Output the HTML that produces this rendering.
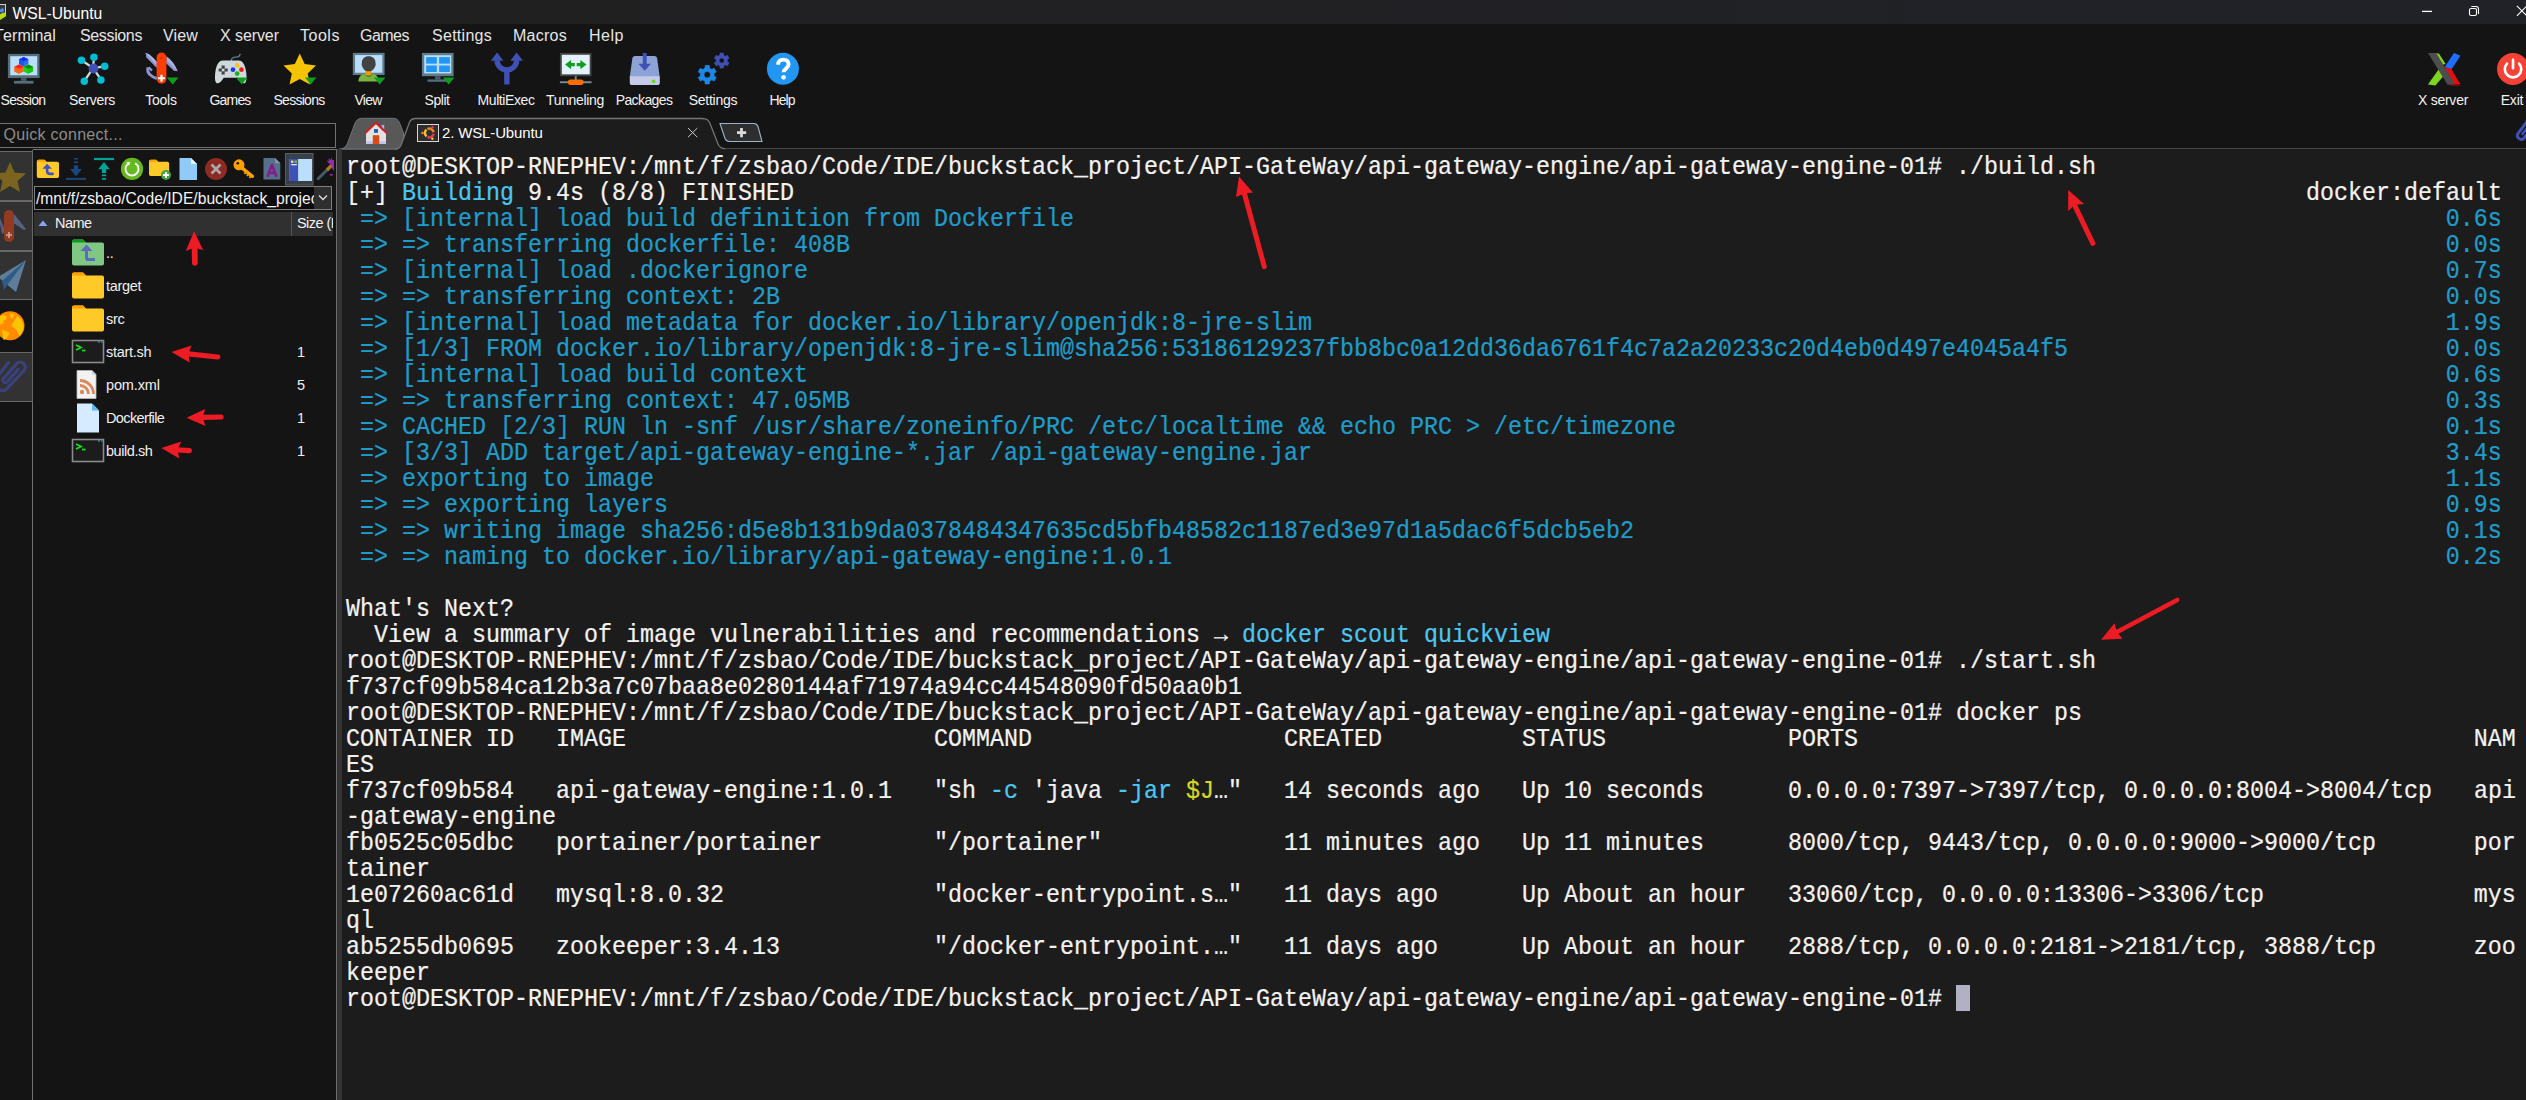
<!DOCTYPE html>
<html>
<head>
<meta charset="utf-8">
<title>WSL-Ubuntu</title>
<style>
*{box-sizing:border-box;margin:0;padding:0}
html,body{width:2526px;height:1100px;overflow:hidden;background:#141414}
body{position:relative;font-family:"Liberation Sans",sans-serif;color:#eee}
.abs{position:absolute}
#titlebar{left:0;top:0;width:2526px;height:23.8px;background:linear-gradient(90deg,#202020 0%,#212124 50%,#202228 100%)}
#title{left:12.5px;top:3.5px;font-size:15.7px;line-height:20px;color:#fff;white-space:nowrap}
.menu{top:26px;font-size:16px;line-height:20px;color:#e6e6e6;white-space:nowrap}
.tb{top:50px;width:68px;height:64px;text-align:center}
.tb svg{position:absolute;left:17.3px;top:2.4px;width:33.5px;height:33.5px;overflow:visible}
.tb span{position:absolute;left:-11px;right:-9px;top:41px;font-size:14px;line-height:18px;color:#f2f2f2;white-space:nowrap;letter-spacing:-0.45px}
#quick{left:-1px;top:123px;width:337px;height:25px;border:1px solid #727272;background:#121212}
#quick span{position:absolute;left:3.5px;top:1px;font-size:16px;line-height:20px;color:#8c8c8c;letter-spacing:0.28px}
#term{left:342px;top:150px;width:2184px;height:950px;background:#1c1c1c}
#split{left:337px;top:149px;width:5px;height:951px;background:#333}
pre{position:absolute;left:4px;top:5px;font-family:"Liberation Mono",monospace;font-size:23.33px;line-height:26px;color:#f2f2f2;white-space:pre;-webkit-text-stroke:0.22px currentColor}
.l{display:block;height:26px;transform-origin:0 19.2px;transform:scaleY(1.065)}
.c{color:#1f9ccc}.b{color:#4cc6f3}.y{color:#d6d629}
#cursor{left:1614px;top:835px;width:14px;height:26px;background:#b2b0c3}
#strip{left:0;top:150px;width:33px;height:950px;background:#141414;border-right:1px solid #707070}
.stab{left:0;width:33px;background:#323232;border:1px solid #686868;border-left:none}
#fpanel{left:33px;top:149px;width:304px;height:951px;border-top:1px solid #747474;border-right:1px solid #6c6c6c}
#path{left:34px;top:186px;width:298px;height:24px;border:1px solid #808080;background:#0c0c0c;overflow:hidden}
#path span{position:absolute;left:1px;top:2px;font-size:15.65px;line-height:20px;color:#f4f4f4;white-space:nowrap}
#pathdd{left:279px;top:0;width:17px;height:22px;background:#2e2e2e}
#fhead{left:34px;top:212px;width:299px;height:24px;background:#303030}
.frow{left:106px;font-size:14.5px;line-height:18px;color:#f0f0f0;white-space:nowrap;letter-spacing:-0.3px}
.fsz{left:296px;width:10px;font-size:14.5px;line-height:18px;color:#f0f0f0;text-align:center}
.fic{left:71px;width:34px;height:30px;overflow:visible}
</style>
</head>
<body>
<div id="titlebar" class="abs"></div>
<div id="title" class="abs">WSL-Ubuntu</div>
<!--WINCTL-->
<svg class="abs" style="left:2400px;top:0;width:126px;height:24px" viewBox="0 0 126 24">
<path d="M22 11.400H32" stroke="#fff" stroke-width="1.300" fill="none"/>
<rect x="69.500" y="8.500" width="7" height="7" rx="1.600" stroke="#fff" stroke-width="1.100" fill="none"/>
<path d="M71.700 6.500H76Q78.500 6.500 78.500 9V13.400" stroke="#fff" stroke-width="1.100" fill="none" stroke-linecap="round"/>
<path d="M116.900 5.900L127.500 16.500M127.500 5.300L116.900 15.900" stroke="#fff" stroke-width="1.100" fill="none"/>
</svg>
<svg class="abs" style="left:0;top:0;width:10px;height:24px" viewBox="0 0 10 24">
<rect x="-6" y="4.500" width="11.500" height="11" fill="#3a3a3a" stroke="#cfcfcf" stroke-width="1"/>
<path d="M0 9.500L2.500 8L4.200 9.500L3.500 11.500L1.500 12.500L0 12Z" fill="#4a8df0"/>
<path d="M0 14.500L2 13L4.500 12.500L5.700 14V16.500L0 20Z" fill="#a8e400"/><path d="M0 15L2.500 13.500L3.500 15.500L0 18Z" fill="#c8d820"/>
</svg>
<!--/WINCTL-->
<!--MENU-->
<div class="abs menu" id="m0" style="left:-4px;letter-spacing:0.06px"><span style="margin-left:-2px;margin-right:-0.8px">T</span>erminal</div>
<div class="abs menu" id="m1" style="left:80px;letter-spacing:-0.36px">Sessions</div>
<div class="abs menu" id="m2" style="left:163px;letter-spacing:0.15px">View</div>
<div class="abs menu" id="m3" style="left:220px;letter-spacing:-0.08px">X server</div>
<div class="abs menu" id="m4" style="left:300px;letter-spacing:0.52px">Tools</div>
<div class="abs menu" id="m5" style="left:360px;letter-spacing:-0.52px">Games</div>
<div class="abs menu" id="m6" style="left:432px;letter-spacing:0.28px">Settings</div>
<div class="abs menu" id="m7" style="left:513px;letter-spacing:0.25px">Macros</div>
<div class="abs menu" id="m8" style="left:589px;letter-spacing:0.53px">Help</div>
<!--/MENU-->
<!--TOOLBAR-->
<div class="abs tb" style="left:-10px"><svg viewBox="0 0 36 36"><rect x="1" y="2" width="34" height="26" fill="#546e7a"/><rect x="3.500" y="4.500" width="29" height="20.500" fill="#bbdefb"/><rect x="15" y="28" width="6" height="3" fill="#455a64"/><rect x="7.500" y="31" width="21" height="3" fill="#546e7a"/>
<path d="M18 5.500l5 2.300v5.200L18 15.500l-5-2.500v-5.200Z" fill="#2a6cf0"/><path d="M18 5.500l5 2.300-5 2.500-5-2.500Z" fill="#1428ff"/><path d="M18 10.300v5.200l-5-2.500v-5.200Z" fill="#1e58e0"/>
<path d="M13 13.500l5 2.300v5.200L13 23.500l-5-2.500v-5.200Z" fill="#f4681e"/><path d="M13 13.500l5 2.300-5 2.500-5-2.500Z" fill="#ff2020"/><path d="M13 18.300v5.200l-5-2.500v-5.200Z" fill="#f06a10"/>
<path d="M23 13.500l5 2.300v5.200L23 23.500l-5-2.500v-5.200Z" fill="#14c414"/><path d="M23 13.500l5 2.300-5 2.500-5-2.500Z" fill="#0c8c0c"/><path d="M23 18.300v5.200l-5-2.500v-5.200Z" fill="#20d020"/></svg><span style="letter-spacing:-0.70px">Session</span></div>
<div class="abs tb" style="left:59px"><svg viewBox="0 0 36 36"><g transform="translate(18.300 18.500) scale(0.940) translate(-18 -18.300)"><g stroke="#cfd8dc" stroke-width="2.600"><path d="M18 17L19 5M18 17L5 8M18 17L31 15M18 17L8 32M18 17L27 30"/></g>
<circle cx="18.500" cy="17.500" r="5.600" fill="#3f51b5"/><circle cx="19" cy="4.500" r="4.300" fill="#00bcd4"/><circle cx="4.700" cy="8" r="4.300" fill="#00bcd4"/><circle cx="31.300" cy="15" r="4.300" fill="#00bcd4"/><circle cx="8" cy="32" r="4.300" fill="#00bcd4"/><circle cx="27" cy="30.500" r="4.300" fill="#00bcd4"/></g></svg><span style="letter-spacing:-0.32px">Servers</span></div>
<div class="abs tb" style="left:128px"><svg viewBox="0 0 36 36"><path d="M0.600 0.900L4.500 2.500Q10 7 12.700 10.400V17L1.800 5.800Z" fill="#b0b6e4"/><path d="M0.600 0.900L12.700 14.500V17L1.800 5.800Z" fill="#8c94d0"/>
<path d="M23 4.600Q31 10 35.100 20.700L31 19.800L23 12Z" fill="#aab0e0"/><path d="M23 9L35.100 20.700L31 19.800L23 12Z" fill="#8c94d0"/>
<path d="M3.200 16.500q-1.200 4.500 2 7.700q3 3 7.500 4.300" stroke="#8c94d0" stroke-width="3.200" fill="none"/><path d="M4 16.500l3.500 3.500" stroke="#8c94d0" stroke-width="2.400"/>
<rect x="12.500" y="0.600" width="10.500" height="33.400" rx="5.200" fill="#ff3d00"/><circle cx="17.700" cy="6.500" r="1.500" fill="#d83000"/><path d="M17.700 24.500v7.500M14 28.200h7.500" stroke="#fff" stroke-width="2.300"/><path d="M23.5 27.5H36L29.8 35Z" fill="#0f9d1f"/></svg><span style="letter-spacing:-0.24px">Tools</span></div>
<div class="abs tb" style="left:197px"><svg viewBox="0 0 36 36"><path d="M18.500 10c0-3.500 2-4.500 5-4.500s4.500-1 4.500-3.500" stroke="#607d8b" stroke-width="1.500" fill="none"/>
<path d="M9.500 9.200h17c4.500 0 7 5 8 12c1 7 0.500 12.500-2.500 12.500c-2.500 0-4.500-3-6.500-6H10.500c-2 3-4 6-6.500 6c-3 0-3.500-5.500-2.500-12.500C2.500 14.200 5 9.200 9.500 9.200Z" fill="#cfd8dc"/>
<path d="M8.200 14.500h3.300v3.200h3.200v3.300h-3.200v3.200h-3.300v-3.200h-3.200v-3.300h3.200Z" fill="#424242"/><rect x="8.400" y="17.900" width="2.900" height="2.900" fill="#cfd8dc"/>
<circle cx="24.900" cy="14.400" r="2.500" fill="#f5c518"/><circle cx="20.400" cy="19" r="2.500" fill="#1a34f0"/><circle cx="29.500" cy="19" r="2.500" fill="#ff1414"/><circle cx="24.900" cy="23.200" r="2.500" fill="#14b414"/><path d="M23.5 27.5H36L29.8 35Z" fill="#0f9d1f"/></svg><span style="letter-spacing:-0.80px">Games</span></div>
<div class="abs tb" style="left:266px"><svg viewBox="0 0 36 36"><path d="M18 1.500L23.300 13L35.500 14.500L26.500 23L29 35L18 29L7 35L9.500 23L0.500 14.500L12.700 13Z" fill="#f5c400"/><path d="M23.5 27.5H36L29.8 35Z" fill="#0f9d1f"/></svg><span style="letter-spacing:-0.71px">Sessions</span></div>
<div class="abs tb" style="left:335px"><svg viewBox="0 0 36 36"><rect x="0.900" y="0.900" width="34.100" height="23.800" fill="#607d8b"/><rect x="3.300" y="3.300" width="29.300" height="19" fill="#bbdefb"/>
<path d="M6.900 31.600c0-6 4-8.400 11-8.400s10.800 2.400 10.800 8.400Z" fill="#7cb342"/><path d="M13.500 22.500h9l-1.500 3a3.500 3.500 0 0 1-6 0Z" fill="#558b2f"/><path d="M14.300 20h6.800v2.800a3.400 2.200 0 0 1-6.800 0Z" fill="#ff9800"/>
<ellipse cx="10.900" cy="14" rx="1" ry="1.600" fill="#ff9800"/><ellipse cx="24.900" cy="14" rx="1" ry="1.600" fill="#ff9800"/>
<path d="M10.600 12c0-5 3-7.400 7.300-7.400s7.400 2.400 7.400 7.400c0 4.500-2.500 8.700-7.400 8.700s-7.300-4.200-7.300-8.700Z" fill="#424242"/><path d="M23.5 27.5H36L29.8 35Z" fill="#0f9d1f"/></svg><span style="letter-spacing:-0.80px">View</span></div>
<div class="abs tb" style="left:404px"><svg viewBox="0 0 36 36"><rect x="1" y="1" width="34" height="25" fill="#607d8b"/><rect x="3.500" y="3.500" width="29" height="19.500" fill="#bbdefb"/>
<rect x="5.500" y="5.500" width="11.500" height="7" fill="#2196f3"/><rect x="19.500" y="5.500" width="11.500" height="7" fill="#2196f3"/><rect x="5.500" y="14.500" width="11.500" height="7" fill="#2196f3"/><rect x="19.500" y="14.500" width="11.500" height="7" fill="#2196f3"/>
<rect x="15" y="26" width="6" height="3.500" fill="#455a64"/><rect x="7" y="29.500" width="22" height="2.500" fill="#546e7a"/><path d="M23.5 27.5H36L29.8 35Z" fill="#0f9d1f"/></svg><span style="letter-spacing:-0.45px">Split</span></div>
<div class="abs tb" style="left:473px"><svg viewBox="0 0 36 36"><path d="M7.600 8.800a10.500 10.500 0 0 0 21 0M18.100 19V35" stroke="#3f51b5" stroke-width="5.800" fill="none"/><path d="M7.600 0.500L14.400 9.300H0.800Z" fill="#3f51b5"/><path d="M28.600 0.500L35.400 9.300H21.800Z" fill="#3f51b5"/></svg><span style="letter-spacing:-0.41px">MultiExec</span></div>
<div class="abs tb" style="left:542px"><svg viewBox="0 0 36 36"><rect x="1" y="1" width="34" height="25" fill="#424242"/><rect x="3" y="3" width="30" height="21" fill="#e3f2fd"/>
<path d="M6.500 13.500L13 8.500v3.300h4v3.400h-4v3.300Z" fill="#0f9d1f"/><path d="M29.500 13.500L23 8.500v3.300h-4v3.400h4v3.300Z" fill="#0f9d1f"/>
<rect x="17" y="26" width="2" height="4" fill="#78909c"/><rect x="1" y="31.500" width="34" height="2" fill="#78909c"/><rect x="9.500" y="29.500" width="17" height="6" rx="3" fill="#ff6d00"/></svg><span style="letter-spacing:-0.34px">Tunneling</span></div>
<div class="abs tb" style="left:611px"><svg viewBox="0 0 36 36"><path d="M7.500 4.200h21c1.500 0 2.500 1 2.800 2.500L34 26v7c0 1.500-1 2.500-2.500 2.500H4.500c-1.500 0-2.500-1-2.500-2.500v-7L4.700 6.700C5 5.200 6 4.200 7.500 4.200Z" fill="#8ca3d6"/>
<path d="M2 26h32v7c0 1.500-1 2.500-2.500 2.500H4.500c-1.500 0-2.500-1-2.500-2.500Z" fill="#c5cae9"/><circle cx="27.500" cy="31.500" r="2" fill="#64dd17"/>
<path d="M15.900 1h4.200v11.500h4.600L18 20.200L11.300 12.500h4.600Z" fill="#3f51b5"/></svg><span style="letter-spacing:-0.60px">Packages</span></div>
<div class="abs tb" style="left:680px"><svg viewBox="0 0 36 36"><path d="M13.36 31.41L13.20 34.26L8.80 34.26L8.64 31.41L6.11 29.95L3.57 31.24L1.36 27.42L3.75 25.86L3.75 22.94L1.36 21.38L3.57 17.56L6.11 18.85L8.64 17.39L8.80 14.54L13.20 14.54L13.36 17.39L15.89 18.85L18.43 17.56L20.64 21.38L18.25 22.94L18.25 25.86L20.64 27.42L18.43 31.24L15.89 29.95ZM7.45 24.40a3.55 3.55 0 1 0 7.10 0a3.55 3.55 0 1 0 -7.10 0Z" fill="#1e88e5" fill-rule="evenodd" stroke="#1e88e5" stroke-width="0.8" stroke-linejoin="round"/><path d="M28.46 14.89L28.34 17.20L24.76 17.20L24.64 14.89L22.58 13.70L20.51 14.75L18.73 11.65L20.67 10.39L20.67 8.01L18.73 6.75L20.51 3.65L22.58 4.70L24.64 3.51L24.76 1.20L28.34 1.20L28.46 3.51L30.52 4.70L32.59 3.65L34.37 6.75L32.43 8.01L32.43 10.39L34.37 11.65L32.59 14.75L30.52 13.70ZM23.75 9.20a2.80 2.80 0 1 0 5.60 0a2.80 2.80 0 1 0 -5.60 0Z" fill="#3f51b5" fill-rule="evenodd" stroke="#3f51b5" stroke-width="0.8" stroke-linejoin="round"/></svg><span style="letter-spacing:-0.26px">Settings</span></div>
<div class="abs tb" style="left:749px"><svg viewBox="0 0 36 36"><circle cx="18.200" cy="18" r="17.200" fill="#2196f3"/><path d="M13 13.800c0-3.800 2.300-5.600 5.600-5.600s5.700 1.800 5.700 4.900c0 4.500-5.300 4.500-5.300 8.600" stroke="#fff" stroke-width="4.200" fill="none"/><circle cx="18.900" cy="27.200" r="2.500" fill="#fff"/></svg><span style="letter-spacing:-0.95px">Help</span></div>
<div class="abs tb" style="left:2410px"><svg viewBox="0 0 36 36"><path d="M1 35L13 18L21 22L9 36Z" fill="#7ed321"/><path d="M9 1L13 2L20 13L16 14Z" fill="#7ed321"/><path d="M29 1L36 4L26 19L19 16Z" fill="#1e6fff"/><path d="M19 16L26 18L36 35L28 34Z" fill="#e01010"/><path d="M23 34L36 35L35 36.500L24 36Z" fill="#a00000"/>
<path d="M1 1H10L30 35H22Z" fill="#4d4d4d"/></svg><span style="letter-spacing:-0.24px">X server</span></div>
<div class="abs tb" style="left:2479px"><svg viewBox="0 0 36 36"><circle cx="18.300" cy="18.300" r="17.200" fill="#f44336"/><path d="M11.800 12.500a8.800 8.800 0 1 0 13 0" stroke="#fff" stroke-width="2.800" fill="none" stroke-linecap="round"/><path d="M18.300 8.500v9" stroke="#fff" stroke-width="2.800" stroke-linecap="round"/></svg><span style="letter-spacing:-0.16px">Exit</span></div>
<!--/TOOLBAR-->
<div id="quick" class="abs"><span>Quick connect...</span></div>
<!--TABS-->
<svg class="abs" style="left:336px;top:110px;width:2190px;height:42px" viewBox="336 110 2190 42">
<path d="M342 148.700H2526" stroke="#747474" stroke-width="1.400" fill="none"/>
<path d="M339.500 149C344.500 149 346.500 146 348 142L354.700 124C356.300 120 358 118.300 362.500 118.300H392C397 118.300 398.500 120 400 124L403.500 133L404 149Z" fill="#585858" stroke="#6a737d" stroke-width="1"/>
<path d="M395 149.500C399 149.500 400.300 147.500 401.300 144.400L409.400 122.500C410.500 119.700 412 118.500 415.500 118.500H702C707 118.500 709 120 711 126L718 144C719.500 147.500 721 148.500 725 148.500H2526V152H395Z" fill="#1c1c1c"/>
<path d="M395 149.300C399 149.300 400.300 147.500 401.300 144.400L409.400 122.500C410.500 119.700 412 118.500 415.500 118.500H702C707 118.500 709 120 711 126L718 144C719.500 147.500 721 148.700 725 148.700" stroke="#747474" stroke-width="1.300" fill="none"/>
<path d="M720 123.500H754C756 123.500 757 124.500 758 126.500L762 141.500H729C727 141.500 726 140.500 725 138.500Z" fill="#2e2e2e" stroke="#9fb4c8" stroke-width="1.100"/>
<path d="M741.500 128v9.200M737 132.600h9.200" stroke="#dcdcdc" stroke-width="2.700"/>
<path d="M688 128L697.300 137.200M697.300 128L688 137.200" stroke="#c8c8c8" stroke-width="1"/>
<!-- home icon -->
<path d="M366 132.500L376 123.500L386 132.500V144H366Z" fill="#e2e2e2"/><rect x="366" y="141.200" width="20" height="2.800" fill="#c0c4f0"/>
<rect x="381.600" y="124.900" width="2.600" height="6" fill="#aab0ea"/>
<path d="M365 133.200L375.900 122.800L386.900 133.200" stroke="#cc2020" stroke-width="2.100" fill="none"/>
<rect x="372.800" y="135.200" width="6.400" height="8.800" fill="#dc4a14"/><rect x="374" y="129.100" width="4" height="3.700" fill="#1a5fb4"/>
<!-- ubuntu tab icon -->
<rect x="417.500" y="124.500" width="21" height="17" fill="#2e2e2e" stroke="#d8d8d8" stroke-width="1"/>
<path d="M426.470 129.630A4.400 4.400 0 0 0 426.470 136.370" stroke="#f5c030" stroke-width="2.500" fill="none"/>
<path d="M427.440 129.010A4.400 4.400 0 0 1 433.630 132.240" stroke="#f08020" stroke-width="2.500" fill="none"/>
<path d="M433.630 133.760A4.400 4.400 0 0 1 427.440 136.990" stroke="#e8385a" stroke-width="2.500" fill="none"/>
<circle cx="422.500" cy="133" r="1.250" fill="#f08a30"/><circle cx="432.400" cy="127.200" r="1.250" fill="#e8385a"/><circle cx="432.400" cy="138.700" r="1.250" fill="#f5c030"/>
<!-- right clip -->
<path d="M2528.500 119.500L2518 133.500a3.800 3.800 0 0 0 5.800 4.800L2531 129.500" stroke="#3f51b5" stroke-width="3" fill="none" stroke-linecap="round"/><path d="M2529.500 125L2522.500 134" stroke="#3f51b5" stroke-width="2.600" fill="none" stroke-linecap="round"/>
</svg>
<div class="abs" id="tabtxt" style="left:442px;top:123px;font-size:15px;line-height:20px;color:#fff;white-space:nowrap;letter-spacing:-0.15px">2. WSL-Ubuntu</div>
<!--/TABS-->
<div id="strip" class="abs"></div>
<!--STRIP-->
<div class="abs stab" style="top:151px;height:50px"></div>
<div class="abs stab" style="top:201px;height:50px"></div>
<div class="abs stab" style="top:251px;height:49px"></div>
<div class="abs stab" style="top:352px;height:50px"></div>
<svg class="abs" style="left:0;top:150px;width:33px;height:260px" viewBox="0 150 33 260">
<path d="M10 162L14.500 172.500L26 173.500L17.500 181L20 192L10 186L0 192L2.500 181L-6 173.500L5.500 172.500Z" fill="#7a6420"/>
<path d="M-2 214L6 232L2 234Z" fill="#565e80"/><path d="M14 214L26 229L24 230L12 222Z" fill="#5a6080"/>
<rect x="4" y="210" width="10" height="32" rx="5" fill="#923a22"/><path d="M9 232v6M6 235h6" stroke="#c9a79d" stroke-width="1.600"/>
<path d="M26 260L-2 277L16 292Z" fill="#5d7d99"/><path d="M26 260L2 281L4 290L8 284Z" fill="#2e5a85"/>
<circle cx="10" cy="325.800" r="14.500" fill="#ff8c00"/>
<path d="M-4 317.500q2-2 5-1.500l2.500-1 3 1.500-0.500 3-3 1 1 2.500-3.500 1.500-2 3-3-1Z" fill="#ffc400"/><path d="M10 313.500l4 0.500-1 4.500-2.500-1Z" fill="#ffc400"/>
<path d="M17 316q5 3 6.500 9.500q0 6-4 10.500l-3-6-5-4.500 3-5Z" fill="#ffc400"/><path d="M2 329.500l7.500 3.500-3 5.500-3 1.500Z" fill="#ffc400"/>
<path d="M8.500 362.500L-3 377" stroke="#3a4078" stroke-width="3.400" fill="none" stroke-linecap="round"/>
<path d="M-2 388.500Q3 393 7.500 388L24 370.500A5 5 0 0 0 16.500 363.800L3.500 378.500A2.300 2.300 0 0 0 7 381.800L18 369.500" stroke="#3a4078" stroke-width="3.400" fill="none" stroke-linecap="round"/>
</svg>
<!--/STRIP-->
<div id="fpanel" class="abs"></div>
<!--FTOOLS-->
<svg class="abs" style="left:33px;top:152px;width:304px;height:34px" viewBox="33 152 304 34">
<rect x="285.500" y="153.500" width="27.500" height="31.500" fill="#37404d" stroke="#5c5c5c" stroke-width="1"/>
<!-- folder up -->
<path d="M36.800 161.500q0-1.700 1.700-1.700h6l2 2h10.800q1.700 0 1.700 1.700v12.700q0 1.700-1.700 1.700h-18.800q-1.700 0-1.700-1.700Z" fill="#ffca28"/><path d="M36.800 161.500q0-1.700 1.700-1.700h6l2 2h-9.700Z" fill="#ffa000"/>
<path d="M47.100 167.500v3.200q0 3.200 3.200 3.200h2.300" stroke="#3f51c8" stroke-width="2.600" fill="none" stroke-linecap="round"/><path d="M42.400 168.700L47.100 163.700L51.900 168.700Z" fill="#3f51c8"/>
<!-- download -->
<path d="M66 178.850H86" stroke="#1a4784" stroke-width="1.900"/><path d="M76 158.100v1.400M76 161.400v1.600M76 165.200v4" stroke="#1a4784" stroke-width="4.200"/><path d="M70.200 169h11.700L76 176.200Z" fill="#1a4784"/>
<!-- upload -->
<path d="M94 159H114.100" stroke="#00a396" stroke-width="2.200"/><path d="M104 179.800v-1.900M104 176.300v-1.900M104 173.100v-4.200" stroke="#00a396" stroke-width="4.300"/><path d="M98.100 169.200h11.800L104 162Z" fill="#00a396"/>
<!-- refresh -->
<circle cx="132" cy="168.900" r="11.100" fill="#66b821"/><path d="M135.250 163.370A6.500 6.500 0 1 1 127.820 164.020" stroke="#fff" stroke-width="1.800" fill="none"/><path d="M130.200 162L126.300 162.300L129 165.800Z" fill="#fff"/>
<!-- new folder -->
<path d="M149 161.500q0-1.700 1.700-1.700h5.500l2 2h9.200q1.700 0 1.700 1.700v10.800q0 1.700-1.700 1.700h-16.700q-1.700 0-1.700-1.700Z" fill="#ffca28"/><path d="M149 161.500q0-1.700 1.700-1.700h5.500l2 2h-9.200Z" fill="#ffa000"/>
<circle cx="166" cy="175" r="5" fill="#43a047"/><path d="M166 172v6M163 175h6" stroke="#fff" stroke-width="1.800"/>
<!-- new file -->
<path d="M179.500 158h11.500l6 6v16h-17.500Z" fill="#90caf9"/><path d="M191 158l6 6h-6Z" fill="#e3f2fd"/>
<!-- delete -->
<circle cx="216" cy="169" r="11" fill="#8e2a24"/><path d="M211.500 164.500l9 9M220.500 164.500l-9 9" stroke="#aaa" stroke-width="2.600"/>
<!-- key -->
<circle cx="239" cy="164.800" r="5.500" fill="#ffa000"/><circle cx="237.800" cy="163.200" r="1.300" fill="#141414"/><path d="M242.500 168.300L252.500 176.300" stroke="#ffa000" stroke-width="3.400" stroke-linecap="round"/><path d="M245.500 172.500l-1 1.600M248 174.500l-1 1.600M250.500 176.300l-1 1.600" stroke="#ffa000" stroke-width="1.800"/>
<!-- A doc -->
<path d="M263.500 158h11.500l5.300 5.300v16.300h-16.800Z" fill="#56708c"/><path d="M275 158l5.300 5.300h-5.300Z" fill="#8497aa"/><path d="M267.600 176.800l4.300-12 4.600 12M269.200 173h5.700" stroke="#80208c" stroke-width="2.700" fill="none" stroke-linejoin="round"/>
<!-- panel -->
<rect x="289.700" y="159" width="22.300" height="22" fill="#bbdefb"/><rect x="289.700" y="159" width="8.400" height="22" fill="#3f51b5"/><rect x="291" y="160.600" width="2.400" height="2.200" fill="#ffeb3b"/><rect x="294.600" y="160.600" width="2.400" height="2.200" fill="#7cc23c"/><path d="M291.200 164.700h5.600" stroke="#fff" stroke-width="1.100"/>
<!-- wand -->
<path d="M318.200 178.600L327.500 169.500" stroke="#455a64" stroke-width="3" stroke-linecap="round"/><path d="M327 170L333 164" stroke="#a57c1c" stroke-width="3.400"/>
<path d="M326.500 160.500l2.500 0.500-0.500-3 2 2 1-3 0.500 3h2v11l-1.500-2-1-3.500-2.500-2.200Z" fill="#9c27b0"/><rect x="329.800" y="174" width="2.800" height="1.600" fill="#9c27b0"/>
</svg>
<div id="path" class="abs"><span>/mnt/f/zsbao/Code/IDE/buckstack_project/API</span><div id="pathdd" class="abs"><svg style="position:absolute;left:4px;top:7px;width:10px;height:8px" viewBox="0 0 10 8"><path d="M1 1.500L5 5.500L9 1.500" stroke="#ddd" stroke-width="1.400" fill="none"/></svg></div></div>
<div id="fhead" class="abs">
<svg style="position:absolute;left:4px;top:8px;width:10px;height:7px" viewBox="0 0 10 7"><path d="M5 0.500L9.500 6H0.500Z" fill="#8aa4f5"/></svg>
<div class="abs" style="left:21px;top:2px;font-size:14.500px;line-height:18px;color:#f2f2f2;letter-spacing:-0.55px">Name</div>
<div class="abs" style="left:257px;top:0;width:1px;height:24px;background:#555"></div>
<div class="abs" style="left:263px;top:2px;font-size:14.500px;line-height:18px;color:#f2f2f2;white-space:nowrap;letter-spacing:-0.55px;width:36px;overflow:hidden">Size (K</div>
</div>
<!--/FTOOLS-->
<!--FILES-->
<svg class="abs fic" style="top:238px" viewBox="0 0 34 30"><path d="M1 3.500q0-2 2-2h9l3 3h16q2 0 2 2v19q0 2-2 2h-28q-2 0-2-2Z" fill="#81c784"/><path d="M1 3.500q0-2 2-2h9l3 3h-14Z" fill="#0a9a1c"/><path d="M15 21.500h9M15.500 21.500v-11" stroke="#5c6bc0" stroke-width="3" fill="none"/><path d="M9.500 13L15.500 6.500L21.500 13Z" fill="#5c6bc0"/></svg><div class="abs frow" style="top:244px">..</div>
<svg class="abs fic" style="top:271px" viewBox="0 0 34 30"><path d="M1 3.500q0-2 2-2h9l3 3h16q2 0 2 2v19q0 2-2 2h-28q-2 0-2-2Z" fill="#ffca28"/><path d="M1 3.500q0-2 2-2h9l3 3h-14Z" fill="#ffa000"/></svg><div class="abs frow" style="top:277px">target</div>
<svg class="abs fic" style="top:304px" viewBox="0 0 34 30"><path d="M1 3.500q0-2 2-2h9l3 3h16q2 0 2 2v19q0 2-2 2h-28q-2 0-2-2Z" fill="#ffca28"/><path d="M1 3.500q0-2 2-2h9l3 3h-14Z" fill="#ffa000"/></svg><div class="abs frow" style="top:310px">src</div>
<svg class="abs fic" style="top:337px" viewBox="0 0 34 30"><rect x="1.500" y="3.500" width="31" height="22" fill="#1c1c1c" stroke="#8a8a8a" stroke-width="1.600"/><path d="M5 8l5 2.500-5 2.500" stroke="#18e018" stroke-width="1.800" fill="none"/><path d="M11 13.500h3.500" stroke="#18e018" stroke-width="1.800"/><path d="M27 5h2M30 5h1.500" stroke="#29b6f6" stroke-width="1"/></svg><div class="abs frow" style="top:343px">start.sh</div><div class="abs fsz" style="top:343px">1</div>
<svg class="abs fic" style="top:370px" viewBox="0 0 34 30"><path d="M6 0.500h15l4 4v24h-19Z" fill="#f2f2f2" stroke="#bbb" stroke-width="0.800"/><path d="M21 0.500l4 4h-4Z" fill="#ccc"/><circle cx="11" cy="22" r="2.200" fill="#d98a5c"/><path d="M9 15.500a8.500 8.500 0 0 1 8.500 8.500M9 10.500a13.500 13.500 0 0 1 13.500 13.500" stroke="#d98a5c" stroke-width="2.800" fill="none"/></svg><div class="abs frow" style="top:376px;letter-spacing:-0.15px">pom.xml</div><div class="abs fsz" style="top:376px">5</div>
<svg class="abs fic" style="top:403px" viewBox="0 0 34 30"><path d="M6 0.500h15l7 7v22h-22Z" fill="#d6ebff"/><path d="M21 0.500l7 7h-7Z" fill="#5ab8f5"/></svg><div class="abs frow" style="top:409px;letter-spacing:-0.62px">Dockerfile</div><div class="abs fsz" style="top:409px">1</div>
<svg class="abs fic" style="top:436px" viewBox="0 0 34 30"><rect x="1.500" y="3.500" width="31" height="22" fill="#1c1c1c" stroke="#8a8a8a" stroke-width="1.600"/><path d="M5 8l5 2.500-5 2.500" stroke="#18e018" stroke-width="1.800" fill="none"/><path d="M11 13.500h3.500" stroke="#18e018" stroke-width="1.800"/><path d="M27 5h2M30 5h1.500" stroke="#29b6f6" stroke-width="1"/></svg><div class="abs frow" style="top:442px;letter-spacing:-0.45px">build.sh</div><div class="abs fsz" style="top:442px">1</div>
<!--/FILES-->
<div id="split" class="abs"></div>
<div id="term" class="abs">
<!--TERM--><pre><span class="l">root@DESKTOP-RNEPHEV:/mnt/f/zsbao/Code/IDE/buckstack_project/API-GateWay/api-gateway-engine/api-gateway-engine-01# ./build.sh</span><span class="l">[+] <span class="b">Building</span> 9.4s (8/8) FINISHED                                                                                                            docker:default</span><span class="l"><span class="c"> =&gt; [internal] load build definition from Dockerfile                                                                                                  0.6s</span></span><span class="l"><span class="c"> =&gt; =&gt; transferring dockerfile: 408B                                                                                                                  0.0s</span></span><span class="l"><span class="c"> =&gt; [internal] load .dockerignore                                                                                                                     0.7s</span></span><span class="l"><span class="c"> =&gt; =&gt; transferring context: 2B                                                                                                                       0.0s</span></span><span class="l"><span class="c"> =&gt; [internal] load metadata for docker.io/library/openjdk:8-jre-slim                                                                                 1.9s</span></span><span class="l"><span class="c"> =&gt; [1/3] FROM docker.io/library/openjdk:8-jre-slim@sha256:53186129237fbb8bc0a12dd36da6761f4c7a2a20233c20d4eb0d497e4045a4f5                           0.0s</span></span><span class="l"><span class="c"> =&gt; [internal] load build context                                                                                                                     0.6s</span></span><span class="l"><span class="c"> =&gt; =&gt; transferring context: 47.05MB                                                                                                                  0.3s</span></span><span class="l"><span class="c"> =&gt; CACHED [2/3] RUN ln -snf /usr/share/zoneinfo/PRC /etc/localtime &amp;&amp; echo PRC &gt; /etc/timezone                                                       0.1s</span></span><span class="l"><span class="c"> =&gt; [3/3] ADD target/api-gateway-engine-*.jar /api-gateway-engine.jar                                                                                 3.4s</span></span><span class="l"><span class="c"> =&gt; exporting to image                                                                                                                                1.1s</span></span><span class="l"><span class="c"> =&gt; =&gt; exporting layers                                                                                                                               0.9s</span></span><span class="l"><span class="c"> =&gt; =&gt; writing image sha256:d5e8b131b9da0378484347635cd5bfb48582c1187ed3e97d1a5dac6f5dcb5eb2                                                          0.1s</span></span><span class="l"><span class="c"> =&gt; =&gt; naming to docker.io/library/api-gateway-engine:1.0.1                                                                                           0.2s</span></span><span class="l"> </span><span class="l">What's Next?</span><span class="l">  View a summary of image vulnerabilities and recommendations → <span class="b">docker scout quickview</span></span><span class="l">root@DESKTOP-RNEPHEV:/mnt/f/zsbao/Code/IDE/buckstack_project/API-GateWay/api-gateway-engine/api-gateway-engine-01# ./start.sh</span><span class="l">f737cf09b584ca12b3a7c07baa8e0280144af71974a94cc44548090fd50aa0b1</span><span class="l">root@DESKTOP-RNEPHEV:/mnt/f/zsbao/Code/IDE/buckstack_project/API-GateWay/api-gateway-engine/api-gateway-engine-01# docker ps</span><span class="l">CONTAINER ID   IMAGE                      COMMAND                  CREATED          STATUS             PORTS                                            NAM</span><span class="l">ES</span><span class="l">f737cf09b584   api-gateway-engine:1.0.1   "sh <span class="b">-c</span> 'java <span class="b">-jar</span> <span class="y">$J</span>…"   14 seconds ago   Up 10 seconds      0.0.0.0:7397-&gt;7397/tcp, 0.0.0.0:8004-&gt;8004/tcp   api</span><span class="l">-gateway-engine</span><span class="l">fb0525c05dbc   portainer/portainer        "/portainer"             11 minutes ago   Up 11 minutes      8000/tcp, 9443/tcp, 0.0.0.0:9000-&gt;9000/tcp       por</span><span class="l">tainer</span><span class="l">1e07260ac61d   mysql:8.0.32               "docker-entrypoint.s…"   11 days ago      Up About an hour   33060/tcp, 0.0.0.0:13306-&gt;3306/tcp               mys</span><span class="l">ql</span><span class="l">ab5255db0695   zookeeper:3.4.13           "/docker-entrypoint.…"   11 days ago      Up About an hour   2888/tcp, 0.0.0.0:2181-&gt;2181/tcp, 3888/tcp       zoo</span><span class="l">keeper</span><span class="l">root@DESKTOP-RNEPHEV:/mnt/f/zsbao/Code/IDE/buckstack_project/API-GateWay/api-gateway-engine/api-gateway-engine-01# </span></pre>
<div id="cursor" class="abs"></div><!--/TERM-->
</div>
<!--ARROWS-->
<svg class="abs" style="left:0;top:0;width:2526px;height:1100px;pointer-events:none" viewBox="0 0 2526 1100"><path d="M1244.4 193.5L1264.3 266.7" stroke="#ed1c24" stroke-width="5.0" stroke-linecap="round" fill="none"/><path d="M1239.0 176.4L1252.9 192.5L1244.4 193.5L1236.0 197.1Z" fill="#ed1c24"/><path d="M2074.5 204.8L2092.9 243.3" stroke="#ed1c24" stroke-width="5.0" stroke-linecap="round" fill="none"/><path d="M2068.2 190.0L2084.2 204.0L2074.5 204.8L2068.2 211.3Z" fill="#ed1c24"/><path d="M2117.0 632.0L2177.2 599.9" stroke="#ed1c24" stroke-width="4.5" stroke-linecap="round" fill="none"/><path d="M2101.1 639.7L2114.5 623.2L2117.0 632.0L2122.5 638.8Z" fill="#ed1c24"/><path d="M194.6 247.5L194.9 262.8" stroke="#ed1c24" stroke-width="5.8" stroke-linecap="round" fill="none"/><path d="M194.1 231.2L203.3 250.2L194.6 247.5L185.8 251.0Z" fill="#ed1c24"/><path d="M188.4 353.9L217.8 357.0" stroke="#ed1c24" stroke-width="5.2" stroke-linecap="round" fill="none"/><path d="M171.5 351.9L191.6 345.4L188.4 353.9L189.6 362.6Z" fill="#ed1c24"/><path d="M202.6 417.3L221.0 417.0" stroke="#ed1c24" stroke-width="5.2" stroke-linecap="round" fill="none"/><path d="M186.5 417.7L205.3 409.0L202.6 417.3L205.5 426.1Z" fill="#ed1c24"/><path d="M177.4 449.8L189.3 450.7" stroke="#ed1c24" stroke-width="5.2" stroke-linecap="round" fill="none"/><path d="M161.4 448.0L181.3 441.4L177.4 449.8L179.3 458.4Z" fill="#ed1c24"/></svg>
<!--/ARROWS-->
</body>
</html>
